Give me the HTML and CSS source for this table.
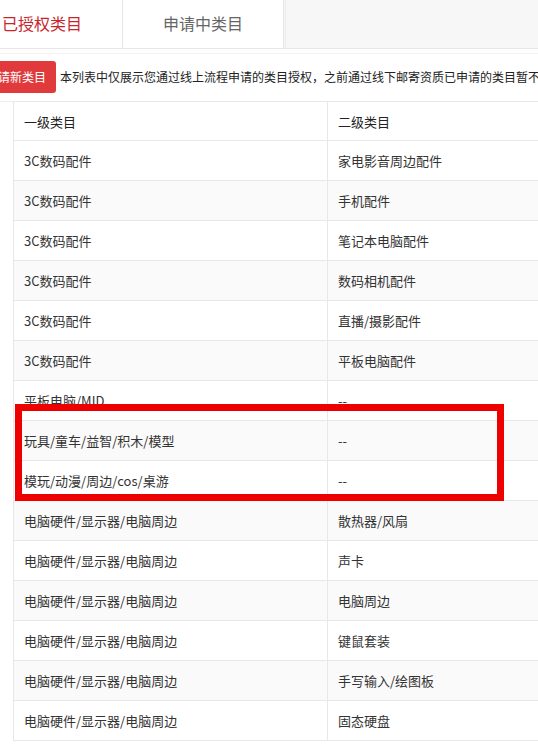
FILE: index.html
```html
<!DOCTYPE html>
<html lang="zh-CN">
<head>
<meta charset="utf-8">
<link rel="stylesheet" href="styles.css">
</head>
<body>
<div class="page">
  <div class="tabs">
    <div class="tab tab-active">已授权类目</div>
    <div class="tab">申请中类目</div>
    <div class="tab-fill"></div>
  </div>
  <div class="toolbar">
    <button class="btn-apply">申请新类目</button>
    <span class="notice">本列表中仅展示您通过线上流程申请的类目授权，之前通过线下邮寄资质已申请的类目暂不显示</span>
  </div>
  <table class="cat-table">
    <thead>
      <tr><th class="c1">一级类目</th><th class="c2">二级类目</th></tr>
    </thead>
    <tbody>
      <tr><td>3C数码配件</td><td>家电影音周边配件</td></tr>
      <tr><td>3C数码配件</td><td>手机配件</td></tr>
      <tr><td>3C数码配件</td><td>笔记本电脑配件</td></tr>
      <tr><td>3C数码配件</td><td>数码相机配件</td></tr>
      <tr><td>3C数码配件</td><td>直播/摄影配件</td></tr>
      <tr><td>3C数码配件</td><td>平板电脑配件</td></tr>
      <tr><td>平板电脑/MID</td><td>--</td></tr>
      <tr><td>玩具/童车/益智/积木/模型</td><td>--</td></tr>
      <tr><td>模玩/动漫/周边/cos/桌游</td><td>--</td></tr>
      <tr><td>电脑硬件/显示器/电脑周边</td><td>散热器/风扇</td></tr>
      <tr><td>电脑硬件/显示器/电脑周边</td><td>声卡</td></tr>
      <tr><td>电脑硬件/显示器/电脑周边</td><td>电脑周边</td></tr>
      <tr><td>电脑硬件/显示器/电脑周边</td><td>键鼠套装</td></tr>
      <tr><td>电脑硬件/显示器/电脑周边</td><td>手写输入/绘图板</td></tr>
      <tr><td>电脑硬件/显示器/电脑周边</td><td>固态硬盘</td></tr>
    </tbody>
  </table>
</div>
<div class="highlight-box"></div>
</body>
</html>
```
FILE: styles.css
```css
html, body {
  margin: 0;
  padding: 0;
  background: #ffffff;
  overflow: hidden;
}
body {
  width: 538px;
  height: 744px;
  position: relative;
  font-family: "Noto Sans CJK SC", "Noto Sans", sans-serif;
  color: #333333;
}
.page {
  margin-left: -38px;
  width: 700px;
}
.tabs {
  display: flex;
  height: 48px;
  border-bottom: 1px solid #e6e6e6;
  background: #f7f7f7;
}
.tab {
  width: 160px;
  flex: none;
  background: #ffffff;
  border-right: 1px solid #e6e6e6;
  display: flex;
  align-items: center;
  justify-content: center;
  font-size: 16px;
  color: #666666;
  padding-bottom: 3px;
  box-sizing: border-box;
  width: 161px;
}
.tab-active {
  color: #c7242b;
}
.tab-fill {
  flex: 1;
  border-left: 1px solid #ececec;
  margin-left: 1px;
}
.toolbar {
  display: flex;
  align-items: center;
  height: 49px;
  border-top: 1px solid #f3f3f3;
  border-bottom: 1px solid #ececec;
  margin-top: 4px;
  box-sizing: border-box;
}
.btn-apply {
  margin-left: 14px;
  height: 32px;
  padding: 0 10px;
  border: none;
  border-radius: 3px;
  background: #e03a3c;
  color: #ffffff;
  font-family: inherit;
  font-size: 12px;
  margin-top: -2px;
}
.notice {
  margin-left: 4px;
  font-size: 12px;
  color: #222222;
  white-space: nowrap;
  margin-top: -2px;
}
.cat-table {
  margin-left: 51px;
  border-collapse: collapse;
  width: 640px;
  font-size: 13px;
  margin-top: -1px;
}
.cat-table th,
.cat-table td {
  text-align: left;
  font-weight: normal;
  padding: 0 0 0 10px;
  height: 39px;
  border: 1px solid #e8e8e8;
  border-right: none;
  color: #333333;
  white-space: nowrap;
}
.cat-table th {
  height: 38px;
  color: #222222;
}
.cat-table .c1 {
  width: 303px;
}
.cat-table tbody tr:nth-child(even) td {
  background: #fafafa;
}
.highlight-box {
  position: absolute;
  left: 15px;
  top: 404px;
  width: 489px;
  height: 97px;
  box-sizing: border-box;
  border: 7px solid #ee0000;
}
```
